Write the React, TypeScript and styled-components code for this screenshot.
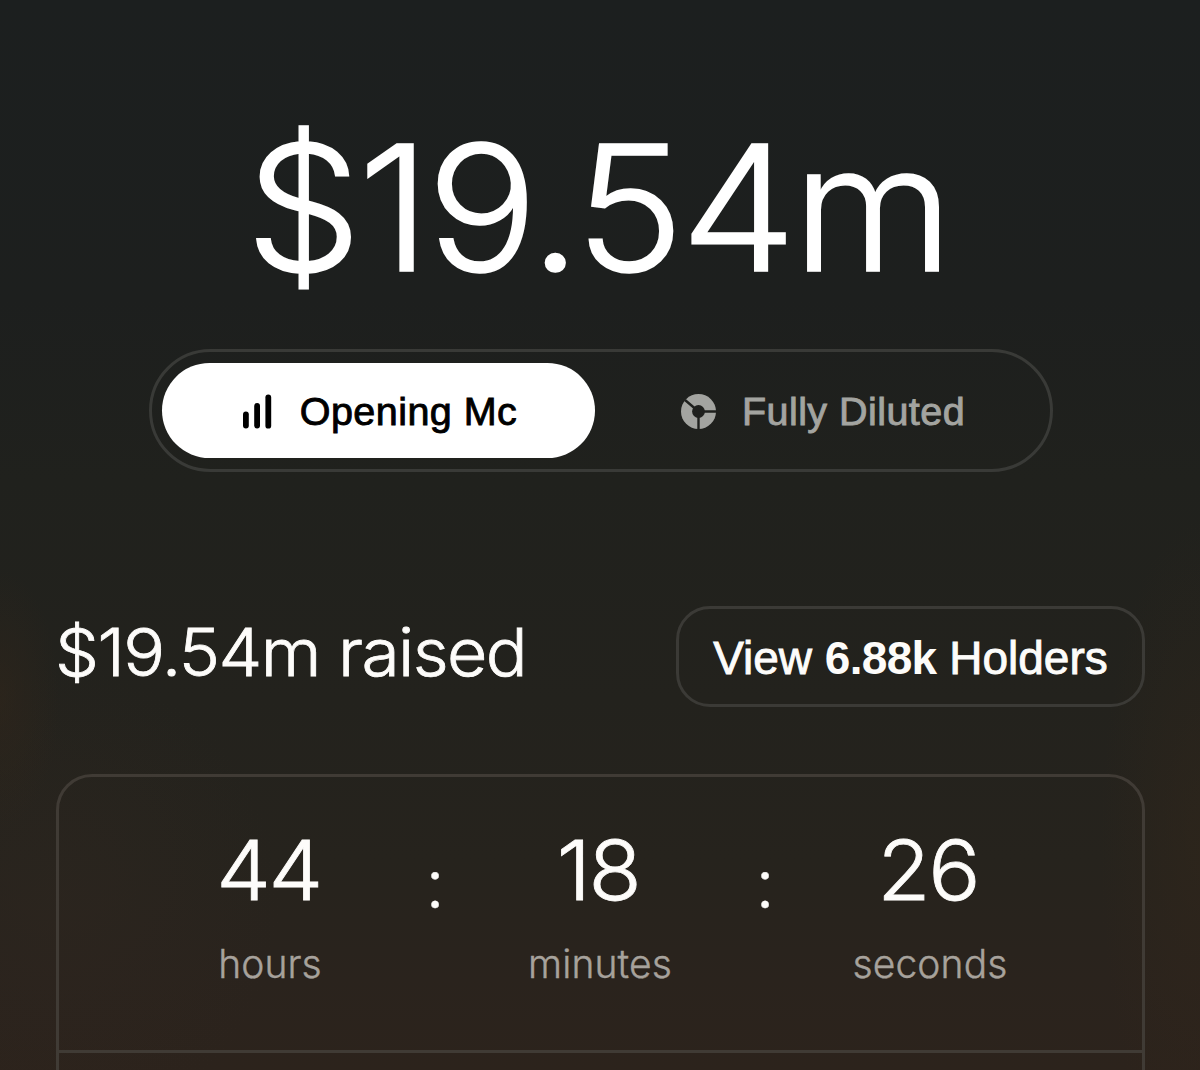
import { Fragment, useState } from "react";
import styled, { createGlobalStyle, css } from "styled-components";

const GlobalStyle = createGlobalStyle`
  * {
    box-sizing: border-box;
  }
  body {
    margin: 0;
    background: #1d1f1e;
    font-family: Inter, "Liberation Sans", sans-serif;
    overflow: hidden;
  }
`;

const Page = styled.main`
  width: 1200px;
  height: 1070px;
  padding: 99px 55px 0 56px;
  overflow: hidden;
  display: flex;
  flex-direction: column;
  color: #fdfcfa;
  background:
    radial-gradient(ellipse 60px 130px at 0 700px, rgba(50, 38, 26, 0.5), transparent),
    radial-gradient(ellipse 100px 330px at 1200px 850px, rgba(52, 39, 26, 0.45), transparent),
    radial-gradient(ellipse 220px 230px at 60px 900px, rgba(48, 39, 32, 0.4), transparent),
    linear-gradient(#1c1f1f 0, #1d1f1e 300px, #20211d 480px, #23221d 700px, #26231d 860px, #2a231d 980px, #2c231c 1070px);
`;

/* wide light face shared by the big figures */
const figures = css`
  font-weight: 300;
  white-space: nowrap;
  transform: scaleX(1.055);
`;

const Amount = styled.h1`
  ${figures}
  margin: 0 6px 0 0;
  height: 216px;
  line-height: 216px;
  font-size: 175px;
  letter-spacing: -3.7px;
  text-align: center;
  color: #fff;
  -webkit-text-stroke: 1.6px currentColor;
`;

const grotesk = css`
  font-family: "Liberation Sans", Arial, sans-serif;
  font-weight: 400;
  -webkit-text-stroke: 0.9px currentColor;
`;

const Toggle = styled.div`
  align-self: center;
  margin-top: 34px;
  width: 904px;
  height: 123px;
  padding: 11px 2px 11px 10px;
  border: 3px solid #393a37;
  border-radius: 62px;
  display: flex;
`;

const ToggleButton = styled.button<{ $active: boolean }>`
  ${grotesk}
  flex: ${(props) => (props.$active ? "0 0 433px" : "1")};
  height: 95px;
  padding: 2px 0 0 4px;
  border: none;
  border-radius: 48px;
  display: flex;
  align-items: center;
  justify-content: center;
  gap: 25px;
  font-size: 39.5px;
  letter-spacing: 0.45px;
  white-space: nowrap;
  cursor: pointer;
  background: ${(props) => (props.$active ? "#fff" : "transparent")};
  color: ${(props) => (props.$active ? "#000" : "#a3a4a0")};
`;

const Summary = styled.section`
  margin-top: 134px;
  height: 101px;
  display: flex;
  align-items: center;
  justify-content: space-between;
`;

const Raised = styled.h2`
  ${figures}
  transform-origin: left;
  margin: 0 0 0 -1px;
  padding-bottom: 9px;
  font-size: 66px;
  letter-spacing: -1.5px;
  -webkit-text-stroke: 0.8px currentColor;
`;

const HoldersButton = styled.button`
  ${grotesk}
  width: 469px;
  height: 101px;
  padding: 3px 0 0;
  border: 3px solid #3b3a36;
  border-radius: 34px;
  background: transparent;
  color: inherit;
  font-size: 46px;
  letter-spacing: 0;
  white-space: nowrap;
  cursor: pointer;

  b {
    font-weight: 700;
    letter-spacing: -0.7px;
    -webkit-text-stroke: 0;
  }
`;

const Card = styled.section`
  margin-top: 67px;
  flex: none;
  width: 1089px;
  height: 360px;
  border: 3px solid #403b35;
  border-radius: 36px;
`;

const Countdown = styled.div`
  height: 276px;
  padding: 51px 47px 0 46px;
  border-bottom: 3px solid #403b35;
  display: grid;
  grid-template-columns: 1fr 0px 1fr 0px 1fr;
  justify-items: center;
`;

const Unit = styled.div`
  display: flex;
  flex-direction: column;
  align-items: center;
`;

const Value = styled.div`
  ${figures}
  margin-right: 4px;
  height: 84px;
  line-height: 84px;
  font-size: 82.5px;
  letter-spacing: -2.4px;
  -webkit-text-stroke: 0.8px currentColor;
`;

const Label = styled.div`
  margin-top: 30px;
  height: 44px;
  line-height: 44px;
  font-size: 39px;
  font-weight: 300;
  letter-spacing: 0.1px;
  color: #a7a29c;
  -webkit-text-stroke: 0.4px currentColor;
`;

const Colon = styled.div`
  padding-top: 17px;
  line-height: 76px;
  font-size: 68px;
  font-weight: 300;
  -webkit-text-stroke: 0.4px currentColor;
`;

function BarsIcon() {
  return (
    <svg width="32" height="36" viewBox="0 0 32 36" fill="currentColor">
      <rect x="0" y="17.5" width="5.8" height="17" rx="2.9" />
      <rect x="11.2" y="9" width="5.8" height="25.5" rx="2.9" />
      <rect x="22.4" y="0.6" width="5.8" height="34" rx="2.9" />
    </svg>
  );
}

function DonutIcon() {
  return (
    <svg width="36" height="36" viewBox="0 0 36 36" fill="none">
      <defs>
        <mask id="donut-gaps">
          <rect width="36" height="36" fill="#fff" />
          <circle cx="17.5" cy="17.5" r="6.4" fill="#000" />
          <path d="M17.5 17.5H36M17.5 17.5V36M17.5 17.5L4 6" stroke="#000" strokeWidth="2.4" />
        </mask>
      </defs>
      <circle cx="17.5" cy="17.5" r="17.5" fill="currentColor" mask="url(#donut-gaps)" />
    </svg>
  );
}

const modes = [
  { id: "opening", label: "Opening Mc", icon: <BarsIcon /> },
  { id: "diluted", label: "Fully Diluted", icon: <DonutIcon /> },
];

const units = [
  { value: "44", label: "hours" },
  { value: "18", label: "minutes" },
  { value: "26", label: "seconds" },
];

export default function App() {
  const [mode, setMode] = useState("opening");

  return (
    <>
      <GlobalStyle />
      <Page>
        <Amount>$19.54m</Amount>
        <Toggle>
          {modes.map(({ id, label, icon }) => (
            <ToggleButton key={id} $active={mode === id} onClick={() => setMode(id)}>
              {icon}
              <span>{label}</span>
            </ToggleButton>
          ))}
        </Toggle>
        <Summary>
          <Raised>$19.54m raised</Raised>
          <HoldersButton>
            View <b>6.88k</b> Holders
          </HoldersButton>
        </Summary>
        <Card>
          <Countdown>
            {units.map(({ value, label }, i) => (
              <Fragment key={label}>
                {i > 0 && <Colon>:</Colon>}
                <Unit>
                  <Value>{value}</Value>
                  <Label>{label}</Label>
                </Unit>
              </Fragment>
            ))}
          </Countdown>
        </Card>
      </Page>
    </>
  );
}
